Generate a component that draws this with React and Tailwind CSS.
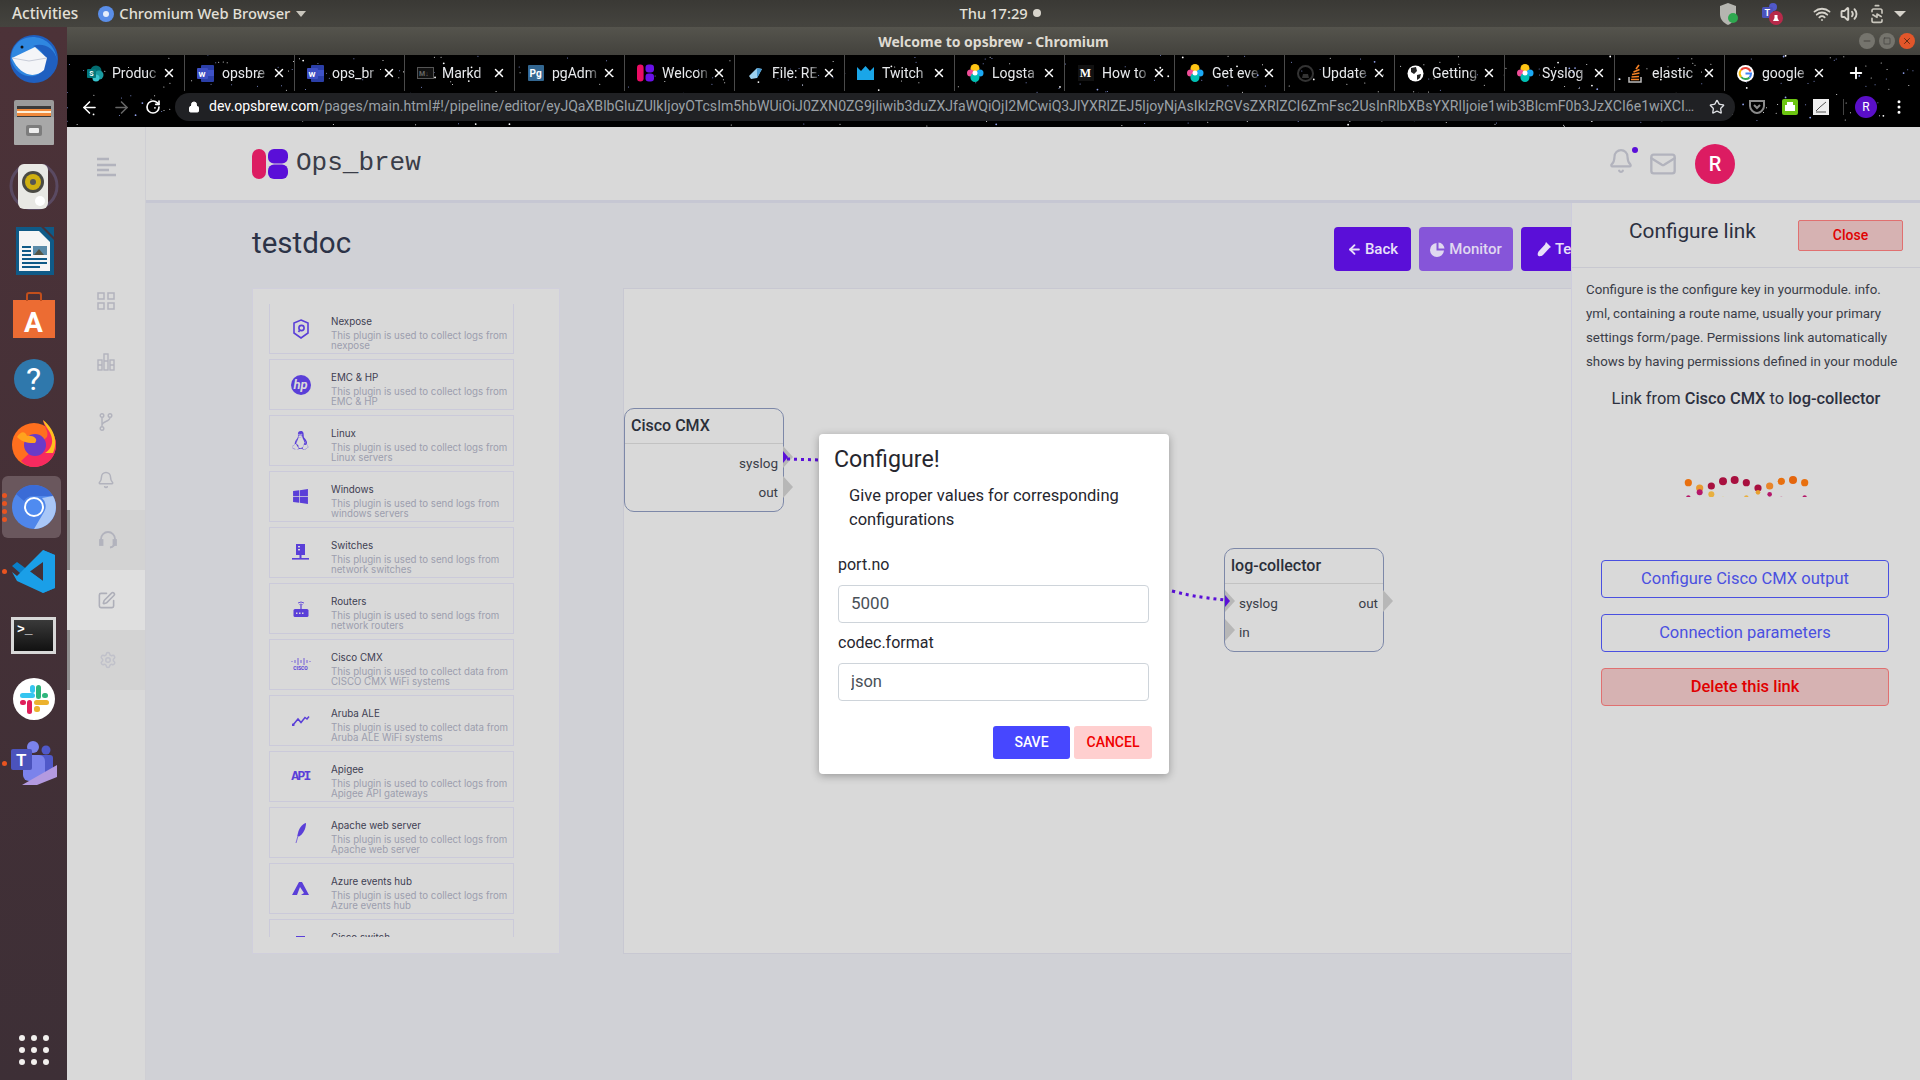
import React from 'react';
import { Bell, Mail, Settings, SquarePen, X, Plus, ArrowLeft, ArrowRight, RotateCw, Lock, Star, Wifi, Volume2, BatteryCharging, Minus, Square, EllipsisVertical } from 'lucide-react';
import { FaLinux, FaWindows } from 'react-icons/fa';

const TABS = [
  { label: 'Produc', icon: 'sharepoint' },
  { label: 'opsbre', icon: 'word' },
  { label: 'ops_br', icon: 'word' },
  { label: 'Markd', icon: 'md' },
  { label: 'pgAdm', icon: 'pg' },
  { label: 'Welcon', icon: 'ops' },
  { label: 'File: RE', icon: 'file' },
  { label: 'Twitch', icon: 'twitch' },
  { label: 'Logsta', icon: 'elastic' },
  { label: 'How to', icon: 'medium' },
  { label: 'Get eve', icon: 'elastic' },
  { label: 'Update', icon: 'github' },
  { label: 'Getting', icon: 'globe' },
  { label: 'Syslog', icon: 'elastic' },
  { label: 'elastic', icon: 'stack' },
  { label: 'google', icon: 'google' },
];

const PLUGINS = [
  { name: 'Nexpose', desc: 'This plugin is used to collect logs from nexpose', icon: 'nexpose' },
  { name: 'EMC & HP', desc: 'This plugin is used to collect logs from EMC & HP', icon: 'hp' },
  { name: 'Linux', desc: 'This plugin is used to collect logs from Linux servers', icon: 'linux' },
  { name: 'Windows', desc: 'This plugin is used to send logs from windows servers', icon: 'windows' },
  { name: 'Switches', desc: 'This plugin is used to send logs from network switches', icon: 'switch' },
  { name: 'Routers', desc: 'This plugin is used to send logs from network routers', icon: 'router' },
  { name: 'Cisco CMX', desc: 'This plugin is used to collect data from CISCO CMX WiFi systems', icon: 'cisco' },
  { name: 'Aruba ALE', desc: 'This plugin is used to collect data from Aruba ALE WiFi systems', icon: 'aruba' },
  { name: 'Apigee', desc: 'This plugin is used to collect logs from Apigee API gateways', icon: 'api' },
  { name: 'Apache web server', desc: 'This plugin is used to collect logs from Apache web server', icon: 'apache' },
  { name: 'Azure events hub', desc: 'This plugin is used to collect logs from Azure events hub', icon: 'azure' },
  { name: 'Cisco switch', desc: 'This plugin is used to collect logs from Cisco switches', icon: 'switch' },
];

// deterministic star field for the browser theme
const STARS = (() => {
  let seed = 7;
  const next = () => {
    seed = (seed * 16807) % 2147483647;
    return seed / 2147483647;
  };
  return Array.from({ length: 420 }, () => ({
    x: next() * 1853,
    y: next() * 72,
    r: next() > 0.85 ? 0.9 : 0.5,
    c: next() > 0.5 ? '#ffffff' : '#8f9fe8',
  }));
})();

const TOP_DOTS = [[352, 152, '#e8700f'], [386, 168, '#e89a30'], [421, 162, '#a8103f'], [456, 148, '#a8103f'], [491, 144, '#a8103f'], [526, 152, '#a8103f'], [561, 168, '#a8103f'], [596, 162, '#e8852a'], [631, 148, '#e8700f'], [666, 144, '#e4650c'], [701, 152, '#e8700f']];
const BOTTOM_DOTS = [[352, 197, '#b5186a'], [386, 181, '#b5186a'], [421, 187, '#e8b040'], [456, 201, '#e8c850'], [491, 206, '#e8c850'], [526, 197, '#e8b040'], [561, 181, '#e8a030'], [596, 187, '#b5186a'], [631, 201, '#b5186a'], [666, 206, '#b5186a'], [701, 197, '#b5186a']];

const TabIcon = ({ type }) => {
  if (type === 'sharepoint') return (
    <svg width="17" height="17" viewBox="0 0 17 17"><circle cx="9" cy="6" r="5.5" fill="#036c70" /><circle cx="12" cy="10" r="4.5" fill="#1a9ba1" /><circle cx="9" cy="13" r="3.5" fill="#37c6d0" /><rect x="0" y="4" width="9" height="9" rx="1" fill="#03787c" /><text x="2.3" y="11" fontSize="7" fill="#fff" fontWeight="700" fontFamily="Roboto, sans-serif">S</text></svg>
  );
  if (type === 'word') return (
    <svg width="17" height="17" viewBox="0 0 17 17"><rect x="4" y="0" width="13" height="17" rx="1" fill="#2b3fa8" /><rect x="4" y="5" width="13" height="6" fill="#3e52c8" /><rect x="0" y="3" width="11" height="11" rx="1" fill="#3d4fc4" /><text x="1.6" y="11.5" fontSize="8" fill="#fff" fontWeight="700" fontFamily="Roboto, sans-serif">W</text></svg>
  );
  if (type === 'md') return (
    <svg width="17" height="12" viewBox="0 0 17 12"><rect x="0.5" y="0.5" width="16" height="11" fill="#111" stroke="#555" /><text x="2" y="9" fontSize="7" fill="#666" fontWeight="700" fontFamily="Roboto, sans-serif">M↓</text></svg>
  );
  if (type === 'pg') return (
    <svg width="16" height="16" viewBox="0 0 16 16"><rect width="16" height="16" rx="1" fill="#336791" /><text x="1.5" y="12" fontSize="10" fill="#fff" fontWeight="700" fontFamily="Roboto, sans-serif">Pg</text></svg>
  );
  if (type === 'ops') return (
    <svg width="18" height="18" viewBox="0 0 18 18"><rect x="0" y="0" width="7" height="18" rx="3.5" fill="#ec0c64" /><rect x="9" y="0" width="9" height="8.5" rx="3.5" fill="#6a11e8" /><rect x="9" y="9.5" width="9" height="8.5" rx="3.5" fill="#6a11e8" /></svg>
  );
  if (type === 'file') return (
    <svg width="16" height="16" viewBox="0 0 16 16"><path d="M1 11 L9 3 L14 4 L9 13 L3 14Z" fill="#9bd0ee" /><path d="M9 3 L14 4 L9 13Z" fill="#4a9ad0" /></svg>
  );
  if (type === 'twitch') return (
    <svg width="17" height="14" viewBox="0 0 17 14"><path d="M0 1 L4 5 L8.5 0 L13 5 L17 1 L17 14 L0 14Z" fill="#1aa6e8" /></svg>
  );
  if (type === 'elastic') return (
    <svg width="17" height="18" viewBox="0 0 17 18"><circle cx="8" cy="4.5" r="4.5" fill="#fec514" /><circle cx="3.5" cy="9" r="3.5" fill="#f04e98" /><circle cx="13" cy="9" r="3.5" fill="#1ba9f5" /><circle cx="8" cy="13.5" r="4.5" fill="#00bfb3" /><circle cx="8" cy="9" r="2.5" fill="#fff" /></svg>
  );
  if (type === 'medium') return (
    <div className="w-[16px] h-[16px] bg-[#111] flex items-center justify-center text-white text-[12px] font-bold font-['Liberation_Serif',serif]">M</div>
  );
  if (type === 'github') return (
    <svg width="17" height="17" viewBox="0 0 17 17"><circle cx="8.5" cy="8.5" r="7.5" fill="none" stroke="#333" strokeWidth="2" /><path d="M5 13 L6 9 L11 9 L12 13Z" fill="#333" /></svg>
  );
  if (type === 'globe') return (
    <svg width="17" height="17" viewBox="0 0 17 17"><circle cx="8.5" cy="8.5" r="8" fill="#fff" /><path d="M4 3 L9 2 L10 6 L7 9 L4 7Z M10 10 L14 9 L13 13 L10 15Z" fill="#222" /></svg>
  );
  if (type === 'stack') return (
    <svg width="15" height="19" viewBox="0 0 15 19"><path d="M1 13 L1 18 L13 18 L13 13" fill="none" stroke="#bcbbbb" strokeWidth="1.5" /><path d="M3 15.5 H11 M3.5 13 L11 12.5 M4 10.5 L11.5 9 M5.5 8 L11.5 5.5 M8 5 L11 1" stroke="#f48024" strokeWidth="1.7" /></svg>
  );
  return (
    <svg width="17" height="17" viewBox="0 0 17 17"><circle cx="8.5" cy="8.5" r="8.5" fill="#fff" /><path d="M13.5 6.5 A5.6 5.6 0 0 0 4 5" fill="none" stroke="#ea4335" strokeWidth="2" /><path d="M4 5 A5.6 5.6 0 0 0 4.2 12" fill="none" stroke="#fbbc05" strokeWidth="2" /><path d="M4.2 12 A5.6 5.6 0 0 0 12.5 12.5" fill="none" stroke="#34a853" strokeWidth="2" /><path d="M8.5 8.5 H14 A5.6 5.6 0 0 1 12.5 12.5" fill="none" stroke="#4285f4" strokeWidth="2" /></svg>
  );
};

const Tab = ({ label, icon, last }) => (
  <div className={`relative w-[110px] h-full flex items-center pl-[12px] shrink-0 ${last ? '' : 'border-r border-[#4a4a4a]'}`}>
    <div className="w-[17px] flex justify-center shrink-0"><TabIcon type={icon} /></div>
    <div className="ml-[8px] w-[49px] overflow-hidden whitespace-nowrap text-[14px] text-[#e8eaed] [mask-image:linear-gradient(to_right,black_72%,transparent)]">{label}</div>
    <X size={14} className="text-white ml-[1px]" strokeWidth={2.5} />
  </div>
);

const DockSlot = ({ children, active, dots = 0 }) => (
  <div className={`relative w-[67px] h-[64px] flex items-center justify-center ${active ? 'before:absolute before:left-[2px] before:right-[6px] before:top-[1px] before:bottom-[1px] before:rounded-md before:bg-[#6a575d]' : ''}`}>
    <div className="relative">{children}</div>
    {dots > 0 && (
      <div className="absolute left-[2px] top-0 bottom-0 flex flex-col justify-center gap-[3px]">
        {Array.from({ length: dots }, (_, i) => <span key={i} className="w-[5px] h-[5px] rounded-full bg-[#e95420]" />)}
      </div>
    )}
  </div>
);

const Thunderbird = () => (
  <svg width="50" height="50" viewBox="0 0 50 50">
    <circle cx="25" cy="25" r="24" fill="#1f5fc0" />
    <path d="M12 6 C26 -2 46 6 48 26 C46 14 34 8 24 12 C30 14 36 20 36 26 L30 40 C20 46 6 40 2 26 C2 16 6 10 12 6Z" fill="#2f87e0" />
    <path d="M3 24 L26 13 L38 24 L35 36 C24 46 10 40 3 24Z" fill="#f4f5f8" />
    <path d="M3 24 L20 27 L38 24" fill="none" stroke="#c8ccd8" strokeWidth="1" />
    <circle cx="13" cy="13" r="1.5" fill="#111" />
  </svg>
);
const Files = () => (
  <svg width="42" height="46" viewBox="0 0 42 46">
    <rect x="1" y="0" width="40" height="44" rx="2" fill="#9a9a9a" />
    <rect x="4" y="6" width="34" height="14" fill="#3a3a3a" />
    <rect x="4" y="9" width="34" height="7" fill="#f08a3c" />
    <rect x="4" y="11" width="34" height="2" fill="#fff0d8" />
    <rect x="1" y="17" width="40" height="28" rx="1" fill="#a8a8a8" />
    <rect x="13" y="25" width="16" height="11" rx="2" fill="#7d7d7d" />
    <rect x="16" y="28" width="10" height="5" rx="1" fill="#eee" />
  </svg>
);
const Rhythmbox = () => (
  <svg width="50" height="46" viewBox="0 0 50 46">
    <circle cx="25" cy="22" r="23" fill="none" stroke="#5a4a62" strokeWidth="3" />
    <rect x="9" y="0" width="30" height="45" rx="6" fill="#e8e8e4" />
    <circle cx="24" cy="18" r="11" fill="#4a4a44" />
    <circle cx="24" cy="18" r="8" fill="#d0b010" />
    <circle cx="24" cy="18" r="3" fill="#555" />
    <circle cx="31" cy="37" r="5" fill="#fff" />
  </svg>
);
const Writer = () => (
  <svg width="40" height="48" viewBox="0 0 40 48">
    <path d="M2 0 H27 L40 13 V48 H2Z" fill="#0f5a87" />
    <path d="M5 4 H25 L36 15 V44 H5Z" fill="#f5f5f5" />
    <path d="M30 0 H40 V10Z" fill="#0f5a87" />
    <rect x="19" y="19" width="14" height="9" fill="#5a8aa8" />
    <path d="M20 28 L25 22 L30 28Z" fill="#554" />
    <path d="M8 20 H17 M8 24 H17 M8 28 H17 M8 32 H33 M8 36 H33 M8 40 H26" stroke="#0f5a87" strokeWidth="2" />
  </svg>
);
const Software = () => (
  <svg width="42" height="46" viewBox="0 0 42 46">
    <rect x="0" y="8" width="42" height="38" fill="#ec6c33" />
    <path d="M14 9 V3 Q14 1 16 1 H26 Q28 1 28 3 V9" fill="none" stroke="#c24f1c" strokeWidth="2" />
    <text x="11" y="40" fontSize="28" fontWeight="700" fill="#fff" fontFamily="Roboto, sans-serif">A</text>
  </svg>
);
const Help = () => (
  <div className="w-[40px] h-[40px] rounded-full bg-[#2f78ac] flex items-center justify-center text-white text-[32px] font-['Roboto',sans-serif] leading-none">?</div>
);
const Firefox = () => (
  <svg width="46" height="48" viewBox="0 0 46 48">
    <circle cx="23" cy="26" r="22" fill="#ff6f1e" />
    <path d="M23 48 C36 48 45 38 45 26 C45 16 38 8 32 1 C33 8 38 12 36 18 L10 42 C14 46 18 48 23 48Z" fill="#f72a5f" />
    <path d="M32 1 C34 8 40 12 41 20 C42 26 38 32 34 34 L42 34 C46 26 46 12 32 1Z" fill="#ffc01e" />
    <circle cx="24" cy="26" r="11" fill="#6a3bc8" />
    <path d="M6 18 C10 12 14 12 16 17 C22 16 28 20 24 24 C18 24 12 24 6 18Z" fill="#ffa31e" />
  </svg>
);
const ChromiumIcon = () => (
  <svg width="44" height="44" viewBox="0 0 44 44">
    <circle cx="22" cy="22" r="22" fill="#4f86ea" />
    <path d="M22 0 A22 22 0 0 1 41 11 L22 11 A11 11 0 0 0 12 16 L4 9 A22 22 0 0 1 22 0Z" fill="#3a6bd6" />
    <path d="M41 11 A22 22 0 0 1 22 44 L32 27 A11 11 0 0 0 30 13Z" fill="#a9c7f7" />
    <circle cx="22" cy="22" r="9" fill="#4f8bf0" stroke="#fff" strokeWidth="2" />
  </svg>
);
const VSCode = () => (
  <svg width="43" height="43" viewBox="0 0 43 43">
    <path d="M31 0 L43 5 V38 L31 43 L0 16 L5 12 L31 31Z" fill="#0a7fc8" />
    <path d="M31 0 L5 26 L0 22 L5 31 L31 43 L43 38 V5Z M31 12 L18 21.5 L31 31Z" fill="#1a9fe8" fillRule="evenodd" />
  </svg>
);
const Terminal = () => (
  <div className="w-[45px] h-[37px] border-[3px] border-[#d8d8d8] bg-[linear-gradient(#3a3a3a,#111)] relative">
    <span className="absolute left-[3px] top-[0px] text-white text-[13px] font-bold font-['Liberation_Mono',monospace]">&gt;_</span>
  </div>
);
const Slack = () => (
  <svg width="42" height="42" viewBox="0 0 42 42">
    <circle cx="21" cy="21" r="21" fill="#fff" />
    <rect x="7" y="15" width="15" height="5" rx="2.5" fill="#36c5f0" />
    <rect x="17" y="7" width="5" height="8" rx="2.5" fill="#36c5f0" />
    <rect x="23" y="7" width="5" height="14" rx="2.5" fill="#2eb67d" />
    <rect x="29" y="15" width="6" height="5" rx="2.5" fill="#2eb67d" />
    <rect x="21" y="22" width="15" height="5" rx="2.5" fill="#ecb22e" />
    <rect x="21" y="28" width="6" height="6" rx="2.5" fill="#ecb22e" />
    <rect x="14" y="22" width="5" height="14" rx="2.5" fill="#e01e5a" />
    <rect x="7" y="22" width="6" height="5" rx="2.5" fill="#e01e5a" />
  </svg>
);
const Teams = () => (
  <svg width="46" height="44" viewBox="0 0 46 44">
    <circle cx="22" cy="6" r="6" fill="#7b83eb" />
    <circle cx="35" cy="9" r="4.5" fill="#5059c9" />
    <rect x="24" y="14" width="18" height="18" rx="3" fill="#5059c9" />
    <rect x="12" y="14" width="22" height="26" rx="6" fill="#7b83eb" />
    <rect x="0" y="8" width="21" height="21" rx="2" fill="#4b53bc" />
    <text x="5" y="25" fontSize="17" fontWeight="600" fill="#fff" fontFamily="Roboto, sans-serif">T</text>
    <path d="M11 44 L46 24 V36 L26 44Z" fill="#b39ae0" />
  </svg>
);

const PluginIcon = ({ type }) => {
  const c = '#5a3fd8';
  if (type === 'nexpose') return (
    <svg width="16" height="20" viewBox="0 0 16 20" fill="none" stroke={c} strokeWidth="1.6"><path d="M8 1 L15 4 V14 L8 19 L1 14 V4Z" /><circle cx="8.5" cy="9" r="2.6" /><path d="M6.5 11.5 L5.5 13" /></svg>
  );
  if (type === 'hp') return (
    <div className={`w-[20px] h-[20px] rounded-full bg-[#5a3fd8] flex items-center justify-center text-[#d9d9d9] text-[13px] font-bold italic leading-none font-['Roboto',sans-serif]`}>hp</div>
  );
  if (type === 'linux') return <FaLinux size={19} color={c} />;
  if (type === 'windows') return <FaWindows size={17} color={c} />;
  if (type === 'switch') return (
    <svg width="17" height="17" viewBox="0 0 17 17" fill={c}><rect x="4" y="0" width="9" height="11" /><rect x="7.5" y="11" width="2" height="3" /><rect x="0" y="14" width="17" height="1.6" /><rect x="6" y="2" width="2" height="1.4" fill="#d9d9d9" /><rect x="6" y="5" width="2" height="1.4" fill="#d9d9d9" /></svg>
  );
  if (type === 'router') return (
    <svg width="16" height="16" viewBox="0 0 16 16" fill={c}><path d="M5 2 Q8 0 11 2 M6.5 3.6 Q8 2.6 9.5 3.6" fill="none" stroke={c} strokeWidth="0.9" /><rect x="7.4" y="4" width="1.2" height="5" /><rect x="0.5" y="8" width="15" height="8" rx="1.5" /><rect x="3" y="11.5" width="1.5" height="1.5" fill="#d9d9d9" /><rect x="6" y="11.5" width="1.5" height="1.5" fill="#d9d9d9" /><rect x="9" y="11.5" width="1.5" height="1.5" fill="#d9d9d9" /></svg>
  );
  if (type === 'cisco') return (
    <div className="flex flex-col items-center leading-none">
      <svg width="20" height="7" viewBox="0 0 20 7" stroke={c} strokeWidth="0.8"><path d="M1 3 V4 M4 2 V5 M7 0 V7 M10 2 V5 M13 0 V7 M16 2 V5 M19 3 V4" /></svg>
      <span className="text-[5px] font-bold text-[#5a3fd8] mt-[1px] font-['Roboto',sans-serif]">CISCO</span>
    </div>
  );
  if (type === 'aruba') return (
    <svg width="18" height="11" viewBox="0 0 18 11" fill="none" stroke={c} strokeWidth="1.5"><path d="M1 10 L6 4 L9 7.5 L13 2.5 L15 4 L17 1.5" /><circle cx="1" cy="10" r="0.8" /></svg>
  );
  if (type === 'api') return <span className="text-[#5a3fd8] text-[13px] font-bold font-['Liberation_Mono',monospace] leading-none tracking-[-1.6px]">API</span>;
  if (type === 'apache') return (
    <svg width="12" height="20" viewBox="0 0 12 20" fill={c}><path d="M11 0 C7 1 3 6 2.5 13 L4 13.5 C8 11 11 6 11 0Z" /><path d="M3.5 11 L1 20" stroke={c} strokeWidth="0.7" /></svg>
  );
  return (
    <svg width="17" height="13" viewBox="0 0 17 13" fill={c}><path d="M7 0 H10 L17 13 H9 L12 11 L8 5 L5 13 H0Z" /></svg>
  );
};

const PluginRow = ({ name, desc, icon }) => (
  <div className="h-[51px] mb-[5px] border border-[#cbcada] flex shrink-0 items-start">
    <div className="w-[61px] h-full flex items-center justify-center shrink-0"><PluginIcon type={icon} /></div>
    <div className="pt-[12px] font-['Inter',sans-serif]">
      <div className="text-[9.8px] leading-[12px] text-[#3e4052]">{name}</div>
      <div className="text-[9.7px] leading-[10.2px] mt-[3px] text-[#9c9eae]">{desc}</div>
    </div>
  </div>
);

const Port = ({ className, dark }) => (
  <svg width="10" height="22" viewBox="0 0 10 22" className={`absolute ${className}`}>
    <polygon points="0,0 10,11 0,22" fill="#b7b7b7" />
    {dark && <polygon points="0,5 5,11 0,17" fill="#5a0fd8" />}
  </svg>
);

const Node = ({ title, className, children }) => (
  <div className={`absolute w-[160px] h-[104px] border border-[#7d88a8] rounded-[10px] bg-[#d9d9d9] ${className}`}>
    <div className="h-[35px] border-b border-[#c2c2c2] px-[6px] flex items-center text-[16px] font-medium text-[#2b2f3a]">{title}</div>
    {children}
  </div>
);

const SideItem = ({ children, tone }) => (
  <div className={`h-[60px] flex items-center justify-center ${tone === 'dark' ? 'bg-[#d3d3d3] border-l-[3px] border-[#8f8f8f]' : tone === 'light' ? 'bg-[#dfdfdf]' : ''}`}>
    {children}
  </div>
);

const App = () => {
  return (
    <div className="w-[1920px] h-[1080px] overflow-hidden flex flex-col font-['Roboto',sans-serif] bg-[#d0d1d6]">
      {/* Ubuntu top bar */}
      <div className="relative h-[27px] shrink-0 flex items-center pl-[12px] pr-[2px] bg-[linear-gradient(#3a3935,#45443f)] text-[14.7px] text-[#e3e0d8] font-['Noto_Sans',sans-serif]">
        <span className="font-medium text-[15.4px]">Activities</span>
        <svg width="16" height="16" viewBox="0 0 16 16" className="ml-[20px]"><circle cx="8" cy="8" r="8" fill="#5a8ee8" /><circle cx="8" cy="8" r="3" fill="#e6eefc" /></svg>
        <span className="ml-[5px] font-medium">Chromium Web Browser</span>
        <span className="ml-[6px] w-0 h-0 border-x-[5px] border-x-transparent border-t-[6px] border-t-[#c8c5bc]" />
        <div className="flex-1 flex justify-center pr-[25px] items-center gap-[5px] font-medium">
          <span>Thu 17:29</span>
          <span className="w-[8px] h-[8px] rounded-full bg-[#d8d5cc]" />
        </div>
        <div className="flex items-center pr-[12px]">
          <svg width="20" height="24" viewBox="0 0 20 24" className="mr-[22px]"><path d="M9 1 L17 4 V12 C17 18 13 21 9 23 C5 21 1 18 1 12 V4Z" fill="#b5b5b0" /><circle cx="14" cy="16" r="5" fill="#2ea84f" /></svg>
          <svg width="24" height="24" viewBox="0 0 24 24" className="mr-[28px]"><circle cx="12" cy="5" r="4" fill="#5059c9" /><rect x="1" y="5" width="11" height="11" rx="1.5" fill="#4b53bc" /><text x="3.5" y="14" fontSize="9" fill="#fff" fontWeight="700" fontFamily="Roboto, sans-serif">T</text><circle cx="15" cy="16" r="7" fill="#b72a4a" /><path d="M12 19 H18 L16.5 16 V13 H13.5 V16Z" fill="#fff" /></svg>
          <Wifi size={18} className="text-[#d5d2ca] mr-[9px]" strokeWidth={2.5} />
          <Volume2 size={18} className="text-[#d5d2ca] mr-[9px]" strokeWidth={2.5} />
          <BatteryCharging size={20} className="text-[#c8c5bc] mr-[7px] -rotate-90" />
          <span className="w-0 h-0 border-x-[6px] border-x-transparent border-t-[6px] border-t-[#d5d2ca]" />
        </div>
      </div>

      <div className="flex flex-1 min-h-0">
        {/* Ubuntu dock */}
        <div className="w-[67px] shrink-0 flex flex-col bg-[linear-gradient(#4c3238,#3d2f36)]">
          <DockSlot><Thunderbird /></DockSlot>
          <DockSlot><Files /></DockSlot>
          <DockSlot><Rhythmbox /></DockSlot>
          <DockSlot><Writer /></DockSlot>
          <DockSlot><Software /></DockSlot>
          <DockSlot><Help /></DockSlot>
          <DockSlot><Firefox /></DockSlot>
          <DockSlot active dots={4}><ChromiumIcon /></DockSlot>
          <DockSlot dots={1}><VSCode /></DockSlot>
          <DockSlot><Terminal /></DockSlot>
          <DockSlot><Slack /></DockSlot>
          <DockSlot dots={1}><Teams /></DockSlot>
          <div className="mt-auto mb-[15px] mx-auto grid grid-cols-3 gap-x-[6px] gap-y-[6px]">
            {Array.from({ length: 9 }, (_, i) => <span key={i} className="w-[6px] h-[6px] rounded-full bg-[#f2f0ee]" />)}
          </div>
        </div>

        {/* Browser window */}
        <div className="flex-1 min-w-0 flex flex-col">
          <div className="h-[28px] shrink-0 flex items-center bg-[linear-gradient(#55544d,#43423d)] relative">
            <div className="flex-1 text-center text-[14px] font-bold text-[#dfdbd2] font-['Noto_Sans',sans-serif]">Welcome to opsbrew - Chromium</div>
            <div className="absolute right-[5px] top-[6px] flex gap-[4px]">
              <span className="w-[16px] h-[16px] rounded-full bg-[#75746d] flex items-center justify-center"><Minus size={10} className="text-[#3e3d39]" /></span>
              <span className="w-[16px] h-[16px] rounded-full bg-[#75746d] flex items-center justify-center"><Square size={8} className="text-[#3e3d39]" /></span>
              <span className="w-[16px] h-[16px] rounded-full bg-[#e2562a] flex items-center justify-center"><X size={10} className="text-[#4a2410]" /></span>
            </div>
          </div>

          <div className="relative h-[72px] shrink-0 bg-black flex flex-col">
            <svg className="absolute inset-0" width="1853" height="72">
              {STARS.map((s, i) => <circle key={i} cx={s.x} cy={s.y} r={s.r} fill={s.c} />)}
            </svg>
            <div className="relative h-[36px] flex items-center pl-[8px]">
              {TABS.map((t, i) => <Tab key={i} {...t} last={i >= TABS.length - 1} />)}
              <Plus size={18} className="text-white ml-[12px]" strokeWidth={2.5} />
            </div>
            <div className="relative h-[28px] mt-[2px] flex items-center">
              <ArrowLeft size={19} className="text-white ml-[13px]" />
              <ArrowRight size={19} className="text-[#666] ml-[13px]" />
              <RotateCw size={16} className="text-white ml-[14px]" strokeWidth={2.5} />
              <div className="ml-[14px] w-[1560px] h-[28px] rounded-full bg-[#202124] flex items-center pl-[13px] pr-[10px] shrink-0">
                <Lock size={12} className="text-white shrink-0" fill="#fff" />
                <div className="ml-[9px] flex-1 min-w-0 truncate text-[14.1px] text-[#9aa0a6]">
                  <span className="text-white">dev.opsbrew.com</span>/pages/main.html#!/pipeline/editor/eyJQaXBlbGluZUlkIjoyOTcsIm5hbWUiOiJ0ZXN0ZG9jIiwib3duZXJfaWQiOjI2MCwiQ3JlYXRlZEJ5IjoyNjAsIklzRGVsZXRlZCI6ZmFsc2UsInRlbXBsYXRlIjoie1wib3BlcmF0b3JzXCI6e1wiXCI6e1wiXCI6e1wi
                </div>
                <Star size={16} className="text-[#dfe1e5] ml-[10px] shrink-0" />
              </div>
              <svg width="18" height="16" viewBox="0 0 18 16" className="ml-[13px]" fill="none" stroke="#8a8a8a" strokeWidth="2"><path d="M2 2 H16 V7 C16 11 12 14 9 14 C6 14 2 11 2 7Z" /><path d="M6 6 L9 9 L12 6" /></svg>
              <svg width="16" height="16" viewBox="0 0 16 16" className="ml-[16px]"><rect width="16" height="16" rx="2" fill="#6cc511" /><rect x="3" y="6" width="10" height="6" fill="#fff" /><rect x="5" y="3" width="6" height="3" fill="#fff" /></svg>
              <svg width="16" height="16" viewBox="0 0 16 16" className="ml-[15px]"><rect width="16" height="16" fill="#eee" /><path d="M3 12 L7 8 L13 3 M3 13 H13" stroke="#555" fill="none" /></svg>
              <span className="ml-[14px] w-px h-[16px] bg-[#444]" />
              <span className="ml-[11px] w-[22px] h-[22px] rounded-full bg-[#5a0fc8] text-white text-[12px] flex items-center justify-center">R</span>
              <EllipsisVertical size={18} className="text-white ml-[13px]" />
            </div>
          </div>

          {/* Page */}
          <div className="flex-1 min-h-0 flex">
            <div className="w-[79px] shrink-0 bg-[#d9d9d9] border-r border-[#cfcfd4] flex flex-col">
              <div className="h-[79px] flex items-center justify-center">
                <svg width="19" height="20" viewBox="0 0 19 20" stroke="#b2b3bd" strokeWidth="2.4"><path d="M0 2 H12 M0 8 H19 M0 13 H12 M0 18 H19" /></svg>
              </div>
              <div className="mt-[65px] h-[60px] flex items-center justify-center">
                <svg width="18" height="18" viewBox="0 0 18 18" fill="none" stroke="#b2b3bd" strokeWidth="1.5"><rect x="1" y="1" width="6" height="6" /><rect x="11" y="1" width="6" height="6" /><rect x="1" y="11" width="6" height="6" /><rect x="11" y="11" width="6" height="6" /></svg>
              </div>
              <div className="h-[62px] flex items-center justify-center">
                <svg width="18" height="18" viewBox="0 0 18 18" fill="none" stroke="#b2b3bd" strokeWidth="1.4"><rect x="1" y="7" width="4" height="10" /><rect x="7" y="1" width="4" height="16" /><rect x="13" y="7" width="4" height="10" /><path d="M1 12 H5 M7 8 H11 M13 12 H17" /></svg>
              </div>
              <div className="h-[57px] flex items-center justify-center">
                <svg width="14" height="18" viewBox="0 0 14 18" fill="none" stroke="#b2b3bd" strokeWidth="1.4"><circle cx="3" cy="2.5" r="1.8" /><circle cx="11" cy="2.5" r="1.8" /><circle cx="3" cy="15.5" r="1.8" /><path d="M3 4.5 V13.5 M11 4.5 C11 9 3 8 3 12" /></svg>
              </div>
              <div className="h-[60px] flex items-center justify-center"><Bell size={18} className="text-[#b2b3bd]" /></div>
              <SideItem tone="dark">
                <svg width="18" height="18" viewBox="0 0 18 18" fill="none" stroke="#b2b3bd" strokeWidth="1.8"><path d="M2 11 V8 A7 7 0 0 1 16 8 V11 C16 14 14 16 11 16.5" /><rect x="1" y="9" width="2.5" height="5" fill="#b2b3bd" /><rect x="14.5" y="9" width="2.5" height="5" fill="#b2b3bd" /></svg>
              </SideItem>
              <SideItem tone="light"><SquarePen size={19} className="text-[#aeafb9]" /></SideItem>
              <SideItem tone="dark"><Settings size={18} className="text-[#c0c1ca]" /></SideItem>
            </div>

            <div className="flex-1 min-w-0 flex flex-col">
              <div className="h-[76px] shrink-0 bg-[#d9d9d9] border-b-[3px] border-[#c6c7d3] flex items-center pl-[106px] pr-[185px]">
                <svg width="36" height="30" viewBox="0 0 36 30"><rect x="0" y="0" width="14" height="30" rx="7" fill="#dc1c62" /><rect x="16" y="0" width="20" height="14.5" rx="6" fill="#5a0fd8" /><rect x="16" y="15.5" width="20" height="14.5" rx="6" fill="#5a0fd8" /></svg>
                <span className="ml-[8px] text-[26px] text-[#3a3d48] font-['Liberation_Mono',monospace]">Ops_brew</span>
                <div className="ml-auto flex items-center">
                  <div className="relative -mt-[6px]">
                    <Bell size={26} className="text-[#b2b3bd]" />
                    <span className="absolute -right-[4px] -top-[1px] w-[6px] h-[6px] rounded-full bg-[#5a0fd8]" />
                  </div>
                  <Mail size={28} className="text-[#b2b3bd] ml-[15px]" />
                  <div className="ml-[18px] w-[40px] h-[40px] rounded-full bg-[#dc1c62] text-white text-[20px] font-medium flex items-center justify-center">R</div>
                </div>
              </div>

              <div className="relative flex-1 min-h-0 flex flex-col">
                <div className="h-[85px] shrink-0 flex items-start pl-[106px] pr-[320px]">
                  <h1 className="mt-[23px] text-[29.5px] leading-[34px] text-[#2c3347] flex-1">testdoc</h1>
                  <div className="mt-[24px] flex gap-[8px] text-[15px] font-medium">
                    <div className="w-[77px] h-[44px] rounded bg-[#5a0fd8] text-[#e8e0f8] flex items-center justify-center gap-[3px]"><ArrowLeft size={15} strokeWidth={3} />Back</div>
                    <div className="w-[94px] h-[44px] rounded bg-[#8655d9] text-[#e0d8f0] flex items-center justify-center gap-[4px]">
                      <svg width="15" height="15" viewBox="0 0 15 15" fill="currentColor"><path d="M6.5 1 V8.5 H14 A7 7 0 1 1 6.5 1Z" /><path d="M8.5 0.5 A6.5 6.5 0 0 1 14.5 6.5 H8.5Z" /></svg>
                      Monitor
                    </div>
                    <div className="w-[79px] h-[44px] rounded bg-[#5a0fd8] text-[#e8e0f8] flex items-center justify-center gap-[3px]">
                      <svg width="15" height="15" viewBox="0 0 15 15" fill="currentColor"><path d="M9 0 L14 5 L12.5 6 L6 13 C4.5 14.5 1.5 14.5 1 13.5 C0.5 13 0.5 10.5 2 9 L8 2.5Z" /></svg>
                      Test
                    </div>
                  </div>
                </div>

                <div className="flex pl-[106px] gap-[63px]">
                  <div className="w-[308px] h-[666px] shrink-0 bg-[#d9d9d9] border border-[#d0cfdc] pl-[16px] pr-[45px] pt-[15px]">
                    <div className="h-[633px] overflow-hidden">
                      <div className="-mt-px">
                        {PLUGINS.map((p) => <PluginRow key={p.name} {...p} />)}
                      </div>
                    </div>
                  </div>

                  <div className="relative flex-1 h-[666px] bg-[#d9d9d9] border border-[#c8c8d2]">
                    <Node title="Cisco CMX" className="left-0 top-[119px]">
                      <div className="absolute right-[5px] top-[44px] text-[13.5px] text-[#3a3d48]">syslog</div>
                      <div className="absolute right-[5px] top-[73px] text-[13.5px] text-[#3a3d48]">out</div>
                      <Port className="-right-[10px] top-[37px]" dark />
                      <Port className="-right-[10px] top-[67px]" />
                    </Node>
                    <Node title="log-collector" className="left-[600px] top-[259px]">
                      <div className="absolute left-[14px] top-[44px] text-[13.5px] text-[#3a3d48]">syslog</div>
                      <div className="absolute right-[5px] top-[44px] text-[13.5px] text-[#3a3d48]">out</div>
                      <div className="absolute left-[14px] top-[73px] text-[13.5px] text-[#3a3d48]">in</div>
                      <Port className="left-0 top-[41px]" dark />
                      <Port className="left-0 top-[70px]" />
                      <Port className="-right-[10px] top-[41px]" />
                    </Node>
                    <svg className="absolute left-0 top-0" width="800" height="400" fill="none" stroke="#5a0fd8" strokeWidth="3" strokeDasharray="3 4">
                      <path d="M163 170 L198 171" />
                      <path d="M548 302 C570 308 585 309 601 311" />
                    </svg>
                  </div>
                </div>

                {/* Configure dialog */}
                <div className="absolute left-[673px] top-[231px] w-[350px] h-[340px] bg-white rounded shadow-[0_2px_8px_rgba(0,0,0,0.3)] pl-[15px] pr-[20px] pt-[9px] text-[#26262e]">
                  <div className="text-[23.2px] leading-[32px]">Configure!</div>
                  <p className="mt-[9px] ml-[15px] text-[16.5px] leading-[24px]">Give proper values for corresponding configurations</p>
                  <div className="mt-[21px] ml-[4px] text-[16px] leading-[24px]">port.no</div>
                  <input readOnly value="5000" className="mt-[8px] ml-[4px] w-[311px] h-[38px] border border-[#ced4da] rounded px-[12px] pb-[2px] text-[17px] text-[#495057] outline-none block" />
                  <div className="mt-[8px] ml-[4px] text-[16px] leading-[24px]">codec.format</div>
                  <input readOnly value="json" className="mt-[8px] ml-[4px] w-[311px] h-[38px] border border-[#ced4da] rounded px-[12px] pb-[2px] text-[16.5px] text-[#495057] outline-none block" />
                  <div className="mt-[25px] flex justify-end gap-[4px] -mr-[3px] text-[14px] font-medium">
                    <button className="w-[77px] h-[33px] rounded-[3px] bg-[#4747ff] text-white">SAVE</button>
                    <button className="w-[78px] h-[33px] rounded-[3px] bg-[#ffcfcf] text-[#f00000]">CANCEL</button>
                  </div>
                </div>

                {/* Configure link drawer */}
                <div className="absolute right-0 top-0 bottom-0 w-[349px] bg-[#d9d9d9] border-l border-[#cdccdc] flex flex-col">
                  <div className="h-[65px] shrink-0 border-b border-[#c8c8d0] flex items-center pl-[57px] pr-[17px]">
                    <span className="text-[20.8px] text-[#2c3040] -mt-[6px]">Configure link</span>
                    <button className="ml-auto w-[105px] h-[31px] rounded-[2px] bg-[#d6b2b2] border border-[#e07070] text-[14px] font-medium text-[#e00000]">Close</button>
                  </div>
                  <p className="px-[14px] pt-[10px] text-[13.3px] leading-[24px] text-[#3a3d48]">Configure is the configure key in yourmodule. info. yml, containing a route name, usually your primary settings form/page. Permissions link automatically shows by having permissions defined in your module</p>
                  <p className="mt-[13px] text-center text-[16.4px] leading-[24px] text-[#2c3040]">Link from <b className="font-medium">Cisco CMX</b> to <b className="font-medium">log-collector</b></p>
                  <svg width="349" height="40" viewBox="0 0 349 40" className="mt-[46px] shrink-0">
                    {TOP_DOTS.map(([x, y, c], i) => <circle key={i} cx={x / 3 - 1} cy={y / 3 - 25} r={i === 4 || i === 3 || i === 9 ? 4 : 3.6} fill={c} />)}
                    {BOTTOM_DOTS.map(([x, y, c], i) => <circle key={i} cx={x / 3 - 1} cy={y / 3 - 25} r={i === 1 || i === 2 ? 3 : 2.3} fill={c} />)}
                  </svg>
                  <div className="ml-[29px] w-[288px] mt-[63px] flex flex-col gap-[16px] text-[16.5px]">
                    <button className="h-[38px] rounded border border-[#4a50e0] text-[#4a50e0]">Configure Cisco CMX output</button>
                    <button className="h-[38px] rounded border border-[#4a50e0] text-[#4a50e0]">Connection parameters</button>
                    <button className="h-[38px] rounded bg-[#d6b2b2] border border-[#e07070] text-[#e00000] font-medium">Delete this link</button>
                  </div>
                </div>
              </div>
            </div>
          </div>
        </div>
      </div>
    </div>
  );
};

export default App;
